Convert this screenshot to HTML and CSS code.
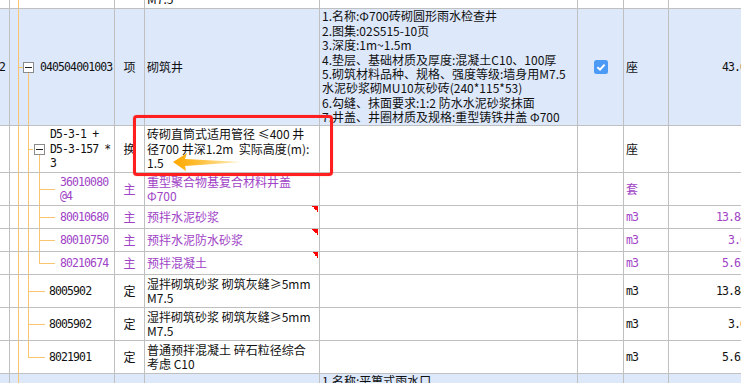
FILE: index.html
```html
<!DOCTYPE html>
<html lang="zh-CN">
<head>
    <meta charset="UTF-8">
    <title>分部分项工程量清单</title>
    <link rel="stylesheet" href="styles.css">
</head>
<body>

    <div class="sheet">
        <table class="grid">
            <colgroup>
                <col class="c-no">
                <col class="c-code">
                <col class="c-type">
                <col class="c-name">
                <col class="c-desc">
                <col class="c-chk">
                <col class="c-unit">
                <col class="c-qty">
            </colgroup>

            <tr class="h33">
                <td class="no"></td>
                <td class="code t-item-last"><div class="cc lv-item"><span class="num">8005902</span></div></td>
                <td class="type">定</td>
                <td class="name">湿拌砌筑砂浆 砌筑灰缝≥5mm<br>M7.5</td>
                <td class="desc"></td>
                <td class="chk"></td>
                <td class="unit num">m3</td>
                <td class="qty num">3.0</td>
            </tr>

            <tr class="h117 sel">
                <td class="no num">2</td>
                <td class="code t-root"><div class="cc lv-root"><span class="tog"></span><span class="num">040504001003</span></div></td>
                <td class="type">项</td>
                <td class="name">砌筑井</td>
                <td class="desc">1.名称:Φ700砖砌圆形雨水检查井<br>2.图集:02S515-10页<br>3.深度:1m~1.5m<br>4.垫层、基础材质及厚度:混凝土C10、100厚<br>5.砌筑材料品种、规格、强度等级:墙身用M7.5<br>水泥砂浆砌MU10灰砂砖(240*115*53)<br>6.勾缝、抹面要求:1:2 防水水泥砂浆抹面<br>7.井盖、井圈材质及规格:重型铸铁井盖 Φ700</td>
                <td class="chk">
                    <svg class="box" width="14" height="14" viewBox="0 0 14 14">
                        <rect width="14" height="14" rx="2.5" fill="#4b9bf6"/>
                        <path d="M3.4 7.3 L6 9.7 L10.6 4.6" fill="none" stroke="#fff" stroke-width="2"/>
                    </svg>
                </td>
                <td class="unit">座</td>
                <td class="qty num">43.0</td>
            </tr>

            <tr class="h47">
                <td class="no"></td>
                <td class="code t-group"><div class="cc lv-group"><span class="tog"></span><span class="num">D5-3-1 +<br>D5-3-157 *<br>3</span></div></td>
                <td class="type">换</td>
                <td class="name">砖砌直筒式适用管径 ≤400 井<br>径700 井深1.2m&nbsp; 实际高度(m):<br>1.5</td>
                <td class="desc"></td>
                <td class="chk"></td>
                <td class="unit">座</td>
                <td class="qty num">1</td>
            </tr>

            <tr class="h33 sub">
                <td class="no"></td>
                <td class="code t-child"><div class="cc lv-child"><span class="num">36010080<br>@4</span></div></td>
                <td class="type">主</td>
                <td class="name">重型聚合物基复合材料井盖<br>Φ700</td>
                <td class="desc"></td>
                <td class="chk"></td>
                <td class="unit">套</td>
                <td class="qty num">1</td>
            </tr>

            <tr class="h23 sub">
                <td class="no"></td>
                <td class="code t-child"><div class="cc lv-child"><span class="num">80010680</span></div></td>
                <td class="type">主</td>
                <td class="name flag">预拌水泥砂浆</td>
                <td class="desc"></td>
                <td class="chk"></td>
                <td class="unit num">m3</td>
                <td class="qty num">13.84</td>
            </tr>

            <tr class="h23 sub">
                <td class="no"></td>
                <td class="code t-child"><div class="cc lv-child"><span class="num">80010750</span></div></td>
                <td class="type">主</td>
                <td class="name flag">预拌水泥防水砂浆</td>
                <td class="desc"></td>
                <td class="chk"></td>
                <td class="unit num">m3</td>
                <td class="qty num">3.0</td>
            </tr>

            <tr class="h23 sub">
                <td class="no"></td>
                <td class="code t-child-last"><div class="cc lv-child"><span class="num">80210674</span></div></td>
                <td class="type">主</td>
                <td class="name flag">预拌混凝土</td>
                <td class="desc"></td>
                <td class="chk"></td>
                <td class="unit num">m3</td>
                <td class="qty num">5.63</td>
            </tr>

            <tr class="h33">
                <td class="no"></td>
                <td class="code t-item"><div class="cc lv-item"><span class="num">8005902</span></div></td>
                <td class="type">定</td>
                <td class="name">湿拌砌筑砂浆 砌筑灰缝≥5mm<br>M7.5</td>
                <td class="desc"></td>
                <td class="chk"></td>
                <td class="unit num">m3</td>
                <td class="qty num">13.84</td>
            </tr>

            <tr class="h33">
                <td class="no"></td>
                <td class="code t-item"><div class="cc lv-item"><span class="num">8005902</span></div></td>
                <td class="type">定</td>
                <td class="name">湿拌砌筑砂浆 砌筑灰缝≥5mm<br>M7.5</td>
                <td class="desc"></td>
                <td class="chk"></td>
                <td class="unit num">m3</td>
                <td class="qty num">3.0</td>
            </tr>

            <tr class="h33">
                <td class="no"></td>
                <td class="code t-item-last"><div class="cc lv-item"><span class="num">8021901</span></div></td>
                <td class="type">定</td>
                <td class="name">普通预拌混凝土 碎石粒径综合<br>考虑 C10</td>
                <td class="desc"></td>
                <td class="chk"></td>
                <td class="unit num">m3</td>
                <td class="qty num">5.63</td>
            </tr>

            <tr class="h117 sel">
                <td class="no num">3</td>
                <td class="code t-root"><div class="cc lv-root"><span class="tog"></span><span class="num">040504002001</span></div></td>
                <td class="type">项</td>
                <td class="name">雨水口</td>
                <td class="desc">1.名称:平箅式雨水口<br>2.图集:16S518-8页<br>3.深度:1m<br>4.垫层、基础材质及厚度:混凝土C10、100厚<br>5.砌筑材料品种、规格、强度等级:墙身用M7.5<br>水泥砂浆砌MU10灰砂砖(240*115*53)<br>6.勾缝、抹面要求:1:2 防水水泥砂浆抹面<br>7.雨水箅子材质及规格:球墨铸铁箅子</td>
                <td class="chk"></td>
                <td class="unit">座</td>
                <td class="qty num">12.0</td>
            </tr>
        </table>

        <!-- annotation drawn over the grid -->
        <div class="mark"></div>
        <svg class="arrow" width="76" height="24" viewBox="0 0 76 24">
            <defs>
                <linearGradient id="fade" x1="0" y1="0" x2="1" y2="0">
                    <stop offset="0" stop-color="#ffa800"/>
                    <stop offset="0.3" stop-color="#ffb92a"/>
                    <stop offset="1" stop-color="#fff2c8"/>
                </linearGradient>
            </defs>
            <polygon points="3,12 17,3 15,9 72,12 15,16 16,21" fill="url(#fade)"/>
        </svg>
    </div>

</body>
</html>
```

FILE: styles.css
```css
/* General */
body {
    margin: 0;
    background: #fff;
    color: #111;
    font: 12px/14.4px "Noto Sans CJK SC", sans-serif;
}

.sheet {
    position: relative;
    width: 741px;
    height: 383px;
    overflow: hidden;
}

.num {
    font-family: "DejaVu Sans Mono", monospace;
    font-size: 11.5px;
    letter-spacing: -0.9px;
}

/* Grid */
.grid {
    --ln: linear-gradient(#fbc46e, #fbc46e);
    border-collapse: collapse;
    table-layout: fixed;
    width: 789px;
    margin: -25px 0 0 -21px;
}

.c-no { width: 30px; }
.c-code { width: 105px; }
.c-type { width: 30px; }
.c-name { width: 175px; }
.c-desc { width: 258px; }
.c-chk { width: 46px; }
.c-unit { width: 45px; }
.c-qty { width: 100px; }

.grid td {
    border: 1px solid #c0c0c0;
    padding: 0 0 0 2px;
    vertical-align: middle;
    white-space: nowrap;
    overflow: hidden;
}

.h117 { height: 117px; }
.h47 { height: 47px; }
.h33 { height: 33px; }
.h23 { height: 23px; }

.sel td { background-color: #dde8fb; }
.sub td { color: #a043c6; }

.grid td.no {
    text-align: right;
    padding: 0 4px 0 0;
}

.grid td.type {
    text-align: center;
    padding: 0;
}

.grid td.chk {
    text-align: center;
    padding: 0;
}

.chk .box {
    display: block;
    margin: 0 auto;
}

.grid td.qty {
    text-align: right;
    padding: 0 22px 0 0;
}

/* red corner flag on edited names */
.grid td.flag {
    background-image: linear-gradient(to bottom left, #f00 50%, transparent 50%);
    background-repeat: no-repeat;
    background-position: right 1px top 0;
    background-size: 6px 6px;
}

/* Tree column */
.grid td.code {
    padding: 0;
    background-repeat: no-repeat;
}

.t-root {
    background-image: var(--ln), var(--ln), var(--ln);
    background-position: 8px 0, 8px 50%, 18px 100%;
    background-size: 1px 100%, 5px 1px, 1px 50%;
}

.t-group {
    background-image: var(--ln), var(--ln), var(--ln), var(--ln);
    background-position: 8px 0, 18px 0, 18px 50%, 29px 100%;
    background-size: 1px 100%, 1px 100%, 5px 1px, 1px 50%;
}

.t-child {
    background-image: var(--ln), var(--ln), var(--ln), var(--ln);
    background-position: 8px 0, 18px 0, 29px 0, 29px 50%;
    background-size: 1px 100%, 1px 100%, 1px 100%, 16px 1px;
}

.t-child-last {
    background-image: var(--ln), var(--ln), var(--ln), var(--ln);
    background-position: 8px 0, 18px 0, 29px 0, 29px 50%;
    background-size: 1px 100%, 1px 100%, 1px 50%, 16px 1px;
}

.t-item {
    background-image: var(--ln), var(--ln), var(--ln);
    background-position: 8px 0, 18px 0, 18px 50%;
    background-size: 1px 100%, 1px 100%, 17px 1px;
}

.t-item-last {
    background-image: var(--ln), var(--ln), var(--ln);
    background-position: 8px 0, 18px 0, 18px 50%;
    background-size: 1px 100%, 1px 50%, 17px 1px;
}

.cc {
    display: flex;
    align-items: center;
}

.lv-root { padding-left: 13px; gap: 6px; }
.lv-group { padding-left: 24px; gap: 5px; }
.lv-child { padding-left: 50px; }
.lv-item { padding-left: 39px; }

.tog {
    flex: none;
    box-sizing: border-box;
    width: 11px;
    height: 11px;
    border: 1px solid #8a8a8a;
    background: linear-gradient(#222, #222) no-repeat center / 7px 1px, #fff;
}

/* Annotation */
.mark {
    position: absolute;
    left: 133px;
    top: 115px;
    width: 200px;
    height: 61px;
    box-sizing: border-box;
    border: 3px solid #ff1f1f;
    border-radius: 4px;
    box-shadow: 0 0 1px rgba(255, 0, 0, 0.6);
}

.arrow {
    position: absolute;
    left: 170px;
    top: 150px;
}
```
